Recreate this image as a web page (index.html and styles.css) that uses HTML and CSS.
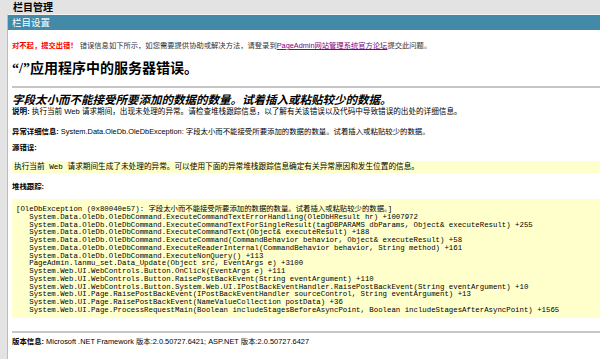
FILE: index.html
```
<!DOCTYPE html>
<html lang="zh-CN">
<head>
    <meta charset="UTF-8">
    <title>栏目管理</title>
    <link rel="stylesheet" href="styles.css">
</head>
<body>
    <div class="topbar">栏目管理</div>

    <div class="panel">
        <div class="panel-head">栏目设置</div>
        <div class="panel-body">
            <p class="notice"><span class="sorry">对不起，提交出错！</span> 错误信息如下所示，如您需要提供协助或解决方法，请登录到<a href="#">PageAdmin网站管理系统官方论坛</a>提交此问题。</p>

            <h1>“/”应用程序中的服务器错误。</h1>
            <hr>

            <h2>字段太小而不能接受所要添加的数据的数量。试着插入或粘贴较少的数据。</h2>
            <p class="desc"><b>说明:</b> 执行当前 Web 请求期间，出现未处理的异常。请检查堆栈跟踪信息，以了解有关该错误以及代码中导致错误的出处的详细信息。</p>
            <p class="detail"><b>异常详细信息:</b> System.Data.OleDb.OleDbException: 字段太小而不能接受所要添加的数据的数量。试着插入或粘贴较少的数据。</p>

            <p class="label"><b>源错误:</b></p>
            <div class="box source">执行当前 Web 请求期间生成了未处理的异常。可以使用下面的异常堆栈跟踪信息确定有关异常原因和发生位置的信息。</div>

            <p class="label stack-label"><b>堆栈跟踪:</b></p>
            <div class="box stack"><pre>[OleDbException (0x80040e57): 字段太小而不能接受所要添加的数据的数量。试着插入或粘贴较少的数据。]
   System.Data.OleDb.OleDbCommand.ExecuteCommandTextErrorHandling(OleDbHResult hr) +1007972
   System.Data.OleDb.OleDbCommand.ExecuteCommandTextForSingleResult(tagDBPARAMS dbParams, Object&amp; executeResult) +255
   System.Data.OleDb.OleDbCommand.ExecuteCommandText(Object&amp; executeResult) +188
   System.Data.OleDb.OleDbCommand.ExecuteCommand(CommandBehavior behavior, Object&amp; executeResult) +58
   System.Data.OleDb.OleDbCommand.ExecuteReaderInternal(CommandBehavior behavior, String method) +161
   System.Data.OleDb.OleDbCommand.ExecuteNonQuery() +113
   PageAdmin.lanmu_set.Data_Update(Object src, EventArgs e) +3100
   System.Web.UI.WebControls.Button.OnClick(EventArgs e) +111
   System.Web.UI.WebControls.Button.RaisePostBackEvent(String eventArgument) +110
   System.Web.UI.WebControls.Button.System.Web.UI.IPostBackEventHandler.RaisePostBackEvent(String eventArgument) +10
   System.Web.UI.Page.RaisePostBackEvent(IPostBackEventHandler sourceControl, String eventArgument) +13
   System.Web.UI.Page.RaisePostBackEvent(NameValueCollection postData) +36
   System.Web.UI.Page.ProcessRequestMain(Boolean includeStagesBeforeAsyncPoint, Boolean includeStagesAfterAsyncPoint) +1565</pre></div>

            <hr class="bottom">
            <p class="version"><b>版本信息:</b> Microsoft .NET Framework 版本:2.0.50727.6421; ASP.NET 版本:2.0.50727.6427</p>
        </div>
    </div>
</body>
</html>
```

FILE: styles.css
```
body {
    margin: 0;
    font-family: "Liberation Sans", "Noto Sans CJK SC", sans-serif;
    background-color: #e3e3e3;
    color: #000;
    overflow: hidden;
}
.topbar {
    height: 14px;
    padding-left: 13px;
    font-size: 10px;
    font-weight: bold;
    line-height: 15px;
}
.panel {
    margin-left: 7px;
    border-left: 1px solid #a9c2cf;
    border-top: 1px solid #f3f3f3;
    background: #fff;
    min-height: 360px;
}
.panel-head {
    height: 15px;
    padding-left: 4px;
    background: #4389a8;
    color: #fff;
    font-size: 9.5px;
    line-height: 15px;
}
.panel-body {
    padding: 0 0 20px 4px;
}
p {
    margin: 0;
    font-size: 7.4px;
    line-height: 10px;
}
.notice {
    margin-top: 10px;
    font-size: 7.3px;
    line-height: 12px;
    color: #333;
}
.sorry {
    color: #f00;
    font-weight: bold;
}
.notice a {
    color: #800080;
}
h1 {
    margin: 8px 0 0;
    font-family: "Liberation Serif", "Noto Sans CJK SC", serif;
    font-size: 14px;
    line-height: 18px;
    font-weight: bold;
}
hr {
    margin: 8px 0 0;
    height: 0;
    border: none;
    border-top: 2px solid #c6c6c6;
}
h2 {
    margin: 6px 0 0;
    font-size: 11.5px;
    line-height: 13px;
    font-style: italic;
    font-weight: bold;
}
.desc {
    font-size: 7.6px;
}
.detail {
    margin-top: 10px;
}
.label {
    margin-top: 6px;
}
.stack-label {
    margin-top: 9px;
}
.box {
    background: #ffffcc;
}
.source {
    margin-top: 8px;
    height: 12px;
    padding-left: 2px;
    font-family: "Liberation Mono", "Noto Sans CJK SC", monospace;
    font-size: 7.65px;
    line-height: 12px;
}
.stack {
    margin-top: 7px;
    padding: 7px 0 3px 4px;
}
pre {
    margin: 0;
    font-family: "Liberation Mono", "Noto Sans CJK SC", monospace;
    font-size: 7.37px;
    line-height: 7.77px;
}
hr.bottom {
    margin-top: 13px;
}
.version {
    margin-top: 4px;
}
```
